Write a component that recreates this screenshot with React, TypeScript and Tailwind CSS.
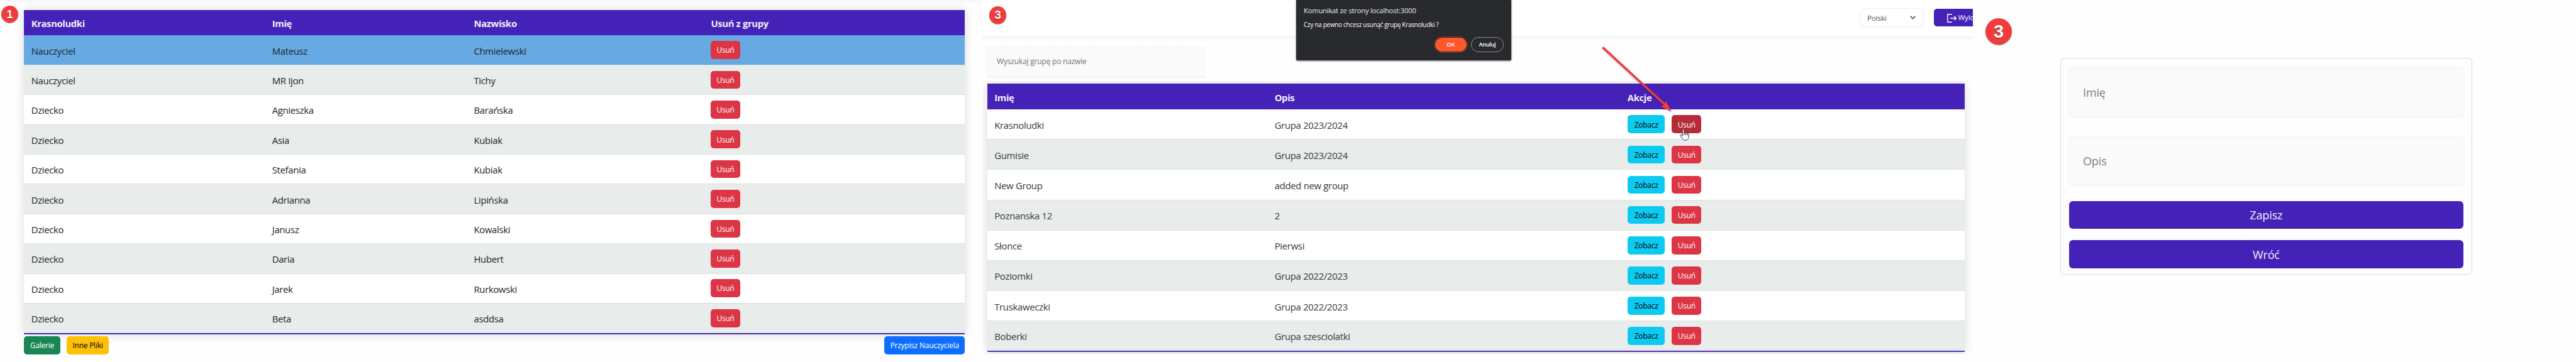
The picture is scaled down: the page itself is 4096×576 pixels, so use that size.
import type { ReactNode } from "react";

const members = [
  ["Nauczyciel", "Mateusz", "Chmielewski"],
  ["Nauczyciel", "MR Ijon", "Tichy"],
  ["Dziecko", "Agnieszka", "Barańska"],
  ["Dziecko", "Asia", "Kubiak"],
  ["Dziecko", "Stefania", "Kubiak"],
  ["Dziecko", "Adrianna", "Lipińska"],
  ["Dziecko", "Janusz", "Kowalski"],
  ["Dziecko", "Daria", "Hubert"],
  ["Dziecko", "Jarek", "Rurkowski"],
  ["Dziecko", "Beta", "asddsa"],
];

const groups = [
  ["Krasnoludki", "Grupa 2023/2024"],
  ["Gumisie", "Grupa 2023/2024"],
  ["New Group", "added new group"],
  ["Poznanska 12", "2"],
  ["Słonce", "Pierwsi"],
  ["Poziomki", "Grupa 2022/2023"],
  ["Truskaweczki", "Grupa 2022/2023"],
  ["Boberki", "Grupa szesciolatki"],
];

function Badge({ className, children }: { className: string; children: ReactNode }) {
  return (
    <div
      className={`absolute flex items-center justify-center rounded-full bg-[#f43b3b] font-['Liberation_Sans',sans-serif] font-bold leading-none text-white shadow-[0_1px_1px_rgba(0,0,0,0.45)] [text-shadow:0_1px_1px_rgba(0,0,0,0.5)] ${className}`}
    >
      {children}
    </div>
  );
}

function SmallButton({ className, children }: { className: string; children: ReactNode }) {
  return (
    <button
      className={`flex h-[28.6px] shrink-0 items-center justify-center whitespace-nowrap rounded-[5px] pt-[1.4px] text-[11.9px] tracking-[-0.2px] ${className}`}
    >
      {children}
    </button>
  );
}

function Cell({ children }: { children: ReactNode }) {
  return <div className="pl-[11.4px] pt-[2.4px]">{children}</div>;
}

function MembersPanel() {
  const cols = "grid grid-cols-[383px_320.8px_377px_415.4px]";
  return (
    <section className="relative h-full w-[1562.3px] shrink-0 overflow-hidden pl-[38.3px] pt-[15.8px] shadow-[inset_0_7px_6px_-4px_rgba(0,0,0,0.04)]">
      <Badge className="left-[2px] top-[9px] size-[27px] text-[18px]">1</Badge>
      <div className="w-[1496.2px] border-b-2 border-[#4422b8] shadow-[0_0_15px_rgba(0,0,0,0.15)]">
        <div className={`${cols} h-[40.6px] items-center bg-[#4422b8] text-[14.8px] font-bold tracking-[-0.35px] text-[#f5eefc]`}>
          <Cell>Krasnoludki</Cell>
          <Cell>Imię</Cell>
          <Cell>Nazwisko</Cell>
          <Cell>Usuń z grupy</Cell>
        </div>
        {members.map(([role, first, last], i) => (
          <div
            key={i}
            className={`${cols} items-center text-[14.8px] tracking-[-0.28px] text-[#212529] ${
              i === members.length - 1 ? "h-[46.6px]" : "h-[47.4px] border-b border-[#dddddd]"
            } ${i === 0 ? "bg-[#66a9e3]" : i % 2 ? "bg-[#e8ecea]" : "bg-white"}`}
          >
            <Cell>{role}</Cell>
            <Cell>{first}</Cell>
            <Cell>{last}</Cell>
            <div className="pl-[11.3px]">
              <SmallButton className="w-[46.3px] bg-[#dc3545] text-white">Usuń</SmallButton>
            </div>
          </div>
        ))}
      </div>
      <div className="flex w-[1496.2px] pt-[3.8px]">
        <SmallButton className="w-[57.4px] bg-[#198754] text-white">Galerie</SmallButton>
        <SmallButton className="ml-[10.6px] w-[66.5px] bg-[#ffc107] text-black">Inne Pliki</SmallButton>
        <SmallButton className="ml-auto w-[128.5px] bg-[#0d6efd] text-white">Przypisz Nauczyciela</SmallButton>
      </div>
    </section>
  );
}

function ConfirmDialog() {
  return (
    <div className="absolute left-[498.3px] top-0 flex h-[95.5px] w-[342.4px] flex-col rounded-b-[2px] bg-[#292a2d] pl-[12.5px] pr-[12.3px] text-white shadow-[0_1px_3px_rgba(0,0,0,0.6)]">
      <div className="mt-[9.3px] text-[11.2px] leading-[16px] tracking-[-0.2px] text-[#e8eaed]">Komunikat ze strony localhost:3000</div>
      <div className="mt-[7px] text-[9.9px] leading-[14px] tracking-[-0.25px]">Czy na pewno chcesz usunąć grupę Krasnoludki ?</div>
      <div className="mt-[12.3px] flex items-center justify-end">
        <button className="mr-[7.5px] flex h-[21.8px] w-[49.2px] items-center justify-center rounded-full bg-[#ff562b] text-[9.2px] font-semibold outline-1 outline-offset-1 outline-[#8a3a26]">
          OK
        </button>
        <button className="flex h-[24.5px] w-[51.7px] items-center justify-center rounded-full border border-[#8e8f94] text-[9.2px] font-semibold tracking-[-0.3px]">
          Anuluj
        </button>
      </div>
    </div>
  );
}

function GroupsPanel() {
  const cols = "grid grid-cols-[445.5px_561.1px_547.5px]";
  return (
    <section className="relative h-full w-[1575.2px] shrink-0 overflow-hidden bg-[#fefefe]">
      <header className="flex h-[57.2px] justify-end overflow-hidden bg-white pt-[14.3px] text-[11.6px]">
        <div className="flex h-[27.8px] w-[97.8px] shrink-0 items-center justify-between rounded-[5px] bg-white pl-[9.5px] pr-[11px] tracking-[-0.1px] text-[#495057] shadow-[0_0_3px_rgba(0,0,0,0.16)]">
          Polski
          <svg className="h-[6px] w-[9px]" viewBox="0 0 9 6" fill="none" stroke="#343a40" strokeWidth="1.4" strokeLinecap="round" strokeLinejoin="round">
            <path d="M1 1l3.5 3.7L8 1" />
          </svg>
        </div>
        <div className="ml-[18.2px] flex h-[27.6px] w-[62.1px] shrink-0 items-center overflow-hidden whitespace-nowrap rounded-l-[5px] bg-[#4422b8] pl-[20.6px] tracking-[-0.1px] text-white">
          <svg className="mr-[2px] mt-[1.5px] h-[14px] w-[15.4px] shrink-0" viewBox="0 0 15.4 14" fill="none" stroke="#fff" strokeWidth="1.4" strokeLinejoin="round">
            <path d="M7.8 .8H.8v12.4h7" />
            <path d="M4.8 7h9.6M11.2 3.7L14.5 7l-3.3 3.3" />
          </svg>
          <span className="pb-[1px]">Wylo</span>
        </div>
      </header>
      <div className="h-[9px] bg-gradient-to-b from-[#f4f4f4] to-[#fefefe]" />
      <div className="ml-[7px] mt-[6.5px] flex h-[49.3px] w-[346.6px] items-center rounded-[4px] bg-[#fafafa] pl-[15.8px] pt-[0.5px] text-[12px] tracking-[-0.2px] text-[#757575] shadow-[0_1px_2px_rgba(0,0,0,0.1)]">
        Wyszukaj grupę po nazwie
      </div>
      <div className="mt-[7px] overflow-hidden pb-[4px] pl-[7.5px] pt-[4px]">
        <div className="w-[1554.1px] border-b-2 border-[#4f2fc0] shadow-[0_0_15px_rgba(0,0,0,0.15)]">
          <div className={`${cols} h-[41.2px] items-center bg-[#4422b8] text-[14.8px] font-bold tracking-[-0.35px] text-[#f5eefc]`}>
            <Cell>Imię</Cell>
            <Cell>Opis</Cell>
            <Cell>Akcje</Cell>
          </div>
          {groups.map(([name, desc], i) => (
            <div
              key={name}
              className={`${cols} items-center text-[14.8px] tracking-[-0.26px] text-[#343a40] ${
                i === groups.length - 1 ? "h-[46.6px]" : "h-[48.13px] border-b border-[#e0e1e1]"
              } ${i % 2 ? "bg-[#e8ecea]" : "bg-white"}`}
            >
              <Cell>{name}</Cell>
              <Cell>{desc}</Cell>
              <div className="flex gap-[11px] pl-[11.5px]">
                <SmallButton className="w-[59.4px] bg-[#0dcaf0] text-black">Zobacz</SmallButton>
                <SmallButton className={`w-[47px] text-white ${i === 0 ? "bg-[#b52b37]" : "bg-[#dc3545]"}`}>Usuń</SmallButton>
              </div>
            </div>
          ))}
        </div>
      </div>

      <Badge className="left-[10.6px] top-[10px] size-[27.6px] text-[18.5px]">3</Badge>
      <ConfirmDialog />
      <svg
        className="absolute left-[981.7px] top-[72px] h-[110px] w-[120px] drop-shadow-[0_1px_1px_rgba(0,0,0,0.35)]"
        viewBox="0 0 120 110"
        fill="#f43b3b"
      >
        <path d="M5.5 4.2L102 93.2" stroke="#f43b3b" strokeWidth="3.4" strokeLinecap="round" />
        <path d="M113.7 105.5L105.3 89.3L101.9 93.9L97.5 97.8Z" />
      </svg>
      <svg className="absolute left-[1108.3px] top-[204.5px] h-[19px] w-[15px]" viewBox="0 0 15 19" fill="#fff" stroke="#2b2d42" strokeWidth="1" strokeLinejoin="round" strokeLinecap="round">
        <path d="M4.3 11.2V2c0-1.9 2.6-1.9 2.6 0v4.8c.3-1.4 2.3-1.2 2.4.2.4-1.1 2.3-.9 2.4.5.5-.9 2.2-.6 2.2 1v3.6c0 3.7-1.5 6.2-5 6.2-2.700 0-4-1.300-5.100-3.200L1 11.200c-.9-1.600.9-2.500 2-1.400z" />
        <path d="M6.9 6.5V9.5M9.3 7V9.7M11.7 7.6V10" />
      </svg>
    </section>
  );
}

function FormPanel() {
  const field =
    "flex h-[75.4px] items-center rounded-[6px] bg-[#fafafa] pl-[21.8px] pt-[1.4px] text-[#7d7d7d] shadow-[0_0_4px_rgba(0,0,0,0.1)]";
  const action = "flex h-[44.3px] w-full items-center justify-center rounded-[6px] bg-[#4422b8] pt-[1.4px] text-[#f5eefc]";
  return (
    <section className="relative h-full flex-1 bg-[#fefefe] pl-[138.2px] pt-[91.5px] text-[18px]">
      <Badge className="left-[19.7px] top-[29px] size-[42px] text-[29px]">3</Badge>
      <div className="h-[345.3px] w-[655.4px] rounded-[6px] border border-[#d6d6d6] px-[13.5px] pt-[16.8px] tracking-[-0.12px]">
        <div className={field}>Imię</div>
        <div className={`mt-[33.7px] ${field}`}>Opis</div>
        <button className={`mt-[25.9px] ${action}`}>Zapisz</button>
        <button className={`mt-[18.4px] ${action}`}>Wróć</button>
      </div>
    </section>
  );
}

export default function App() {
  return (
    <main className="flex h-[576px] w-[4096px] overflow-hidden bg-[#fefefe] font-['Open_Sans',sans-serif]">
      <MembersPanel />
      <GroupsPanel />
      <FormPanel />
    </main>
  );
}
